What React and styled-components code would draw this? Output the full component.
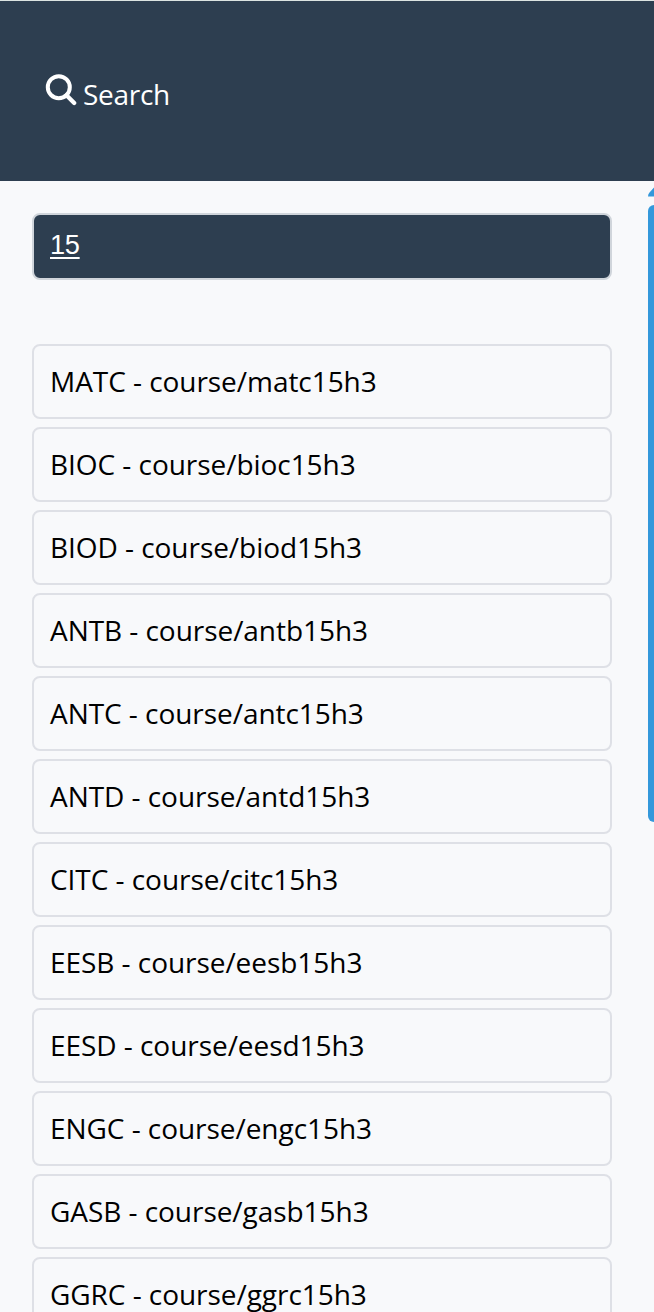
import React from "react";
import styled, { createGlobalStyle } from "styled-components";

const GlobalStyle = createGlobalStyle`
  *, *::before, *::after { box-sizing: border-box; }
  html, body { margin: 0; background: #f8f9fb; }
  body { height: 1312px; overflow: hidden; }
`;

const Page = styled.div`
  position: relative;
  height: 1312px;
  overflow: hidden;
  background: #f8f9fb;
  color: #000;
  font-family: "Open Sans", Lato, sans-serif;
  font-size: 28px;
  letter-spacing: -0.05px;
`;

const Header = styled.header`
  display: flex;
  align-items: center;
  height: 181px;
  padding: 0 0 0 45px;
  border-top: 1px solid #dce3e1;
  background: #2d3e50;
  color: #fff;
`;

const SearchIcon = styled.svg`
  width: 32px;
  height: 32px;
  margin: -2px 6px 0 0;
`;

const Label = styled.span`
  display: block;
  padding-bottom: 2px;
  white-space: pre;
  line-height: 38px;
`;

const HeaderLabel = styled(Label)`
  margin-top: 7px;
  letter-spacing: -0.3px;
`;

const Content = styled.main`
  padding: 32px 42px 0 32px;
`;

const SearchBox = styled.div`
  height: 67px;
  padding: 14px 16px;
  border: 2px solid #d0d5db;
  border-radius: 8px;
  background: #2d3e50;
  color: #fff;
  font: 27.2px/31px "Liberation Sans", Arial, sans-serif;
  letter-spacing: -0.3px;
  text-decoration: underline;
  text-decoration-thickness: 2px;
  text-underline-offset: 3px;
`;

const Results = styled.ul`
  display: flex;
  flex-direction: column;
  gap: 8px;
  margin: 64px 0 0;
  padding: 0;
  list-style: none;
`;

const Result = styled.li`
  display: flex;
  align-items: center;
  height: 75px;
  padding: 0 16px;
  border: 2px solid #dee0e6;
  border-radius: 8px;
`;

const Scrollbar = styled.div`
  position: absolute;
  top: 187px;
  left: 648px;
  width: 17px;
`;

const Arrow = styled.svg`
  display: block;
  width: 17px;
  height: 10px;
`;

const Thumb = styled.div`
  height: 617px;
  margin-top: 8px;
  border-radius: 6px;
  background: #3498db;
`;

const courses = [
  "MATC - course/matc15h3",
  "BIOC - course/bioc15h3",
  "BIOD - course/biod15h3",
  "ANTB - course/antb15h3",
  "ANTC - course/antc15h3",
  "ANTD - course/antd15h3",
  "CITC - course/citc15h3",
  "EESB - course/eesb15h3",
  "EESD - course/eesd15h3",
  "ENGC - course/engc15h3",
  "GASB - course/gasb15h3",
  "GGRC - course/ggrc15h3",
];

export default function App() {
  return (
    <>
      <GlobalStyle />
      <Page>
        <Header>
          <SearchIcon viewBox="0 0 32 32" fill="none" stroke="#fff" strokeWidth="4">
            <circle cx="13.8" cy="13.2" r="11" />
            <path d="M21.5 21.2 29.2 29" strokeWidth="4.2" strokeLinecap="round" />
          </SearchIcon>
          <HeaderLabel>Search</HeaderLabel>
        </Header>
        <Content>
          <SearchBox>15</SearchBox>
          <Results>
            {courses.map((c) => (
              <Result key={c}>
                <Label>{c}</Label>
              </Result>
            ))}
          </Results>
        </Content>
        <Scrollbar>
          <Arrow viewBox="0 0 17 10">
            <path d="M0 9.5Q0 7 1.5 5.5L6 0.5Q8.5-1.5 11 0.5L15.5 5.5Q17 7 17 9.5Z" fill="#3498db" />
          </Arrow>
          <Thumb />
        </Scrollbar>
      </Page>
    </>
  );
}
